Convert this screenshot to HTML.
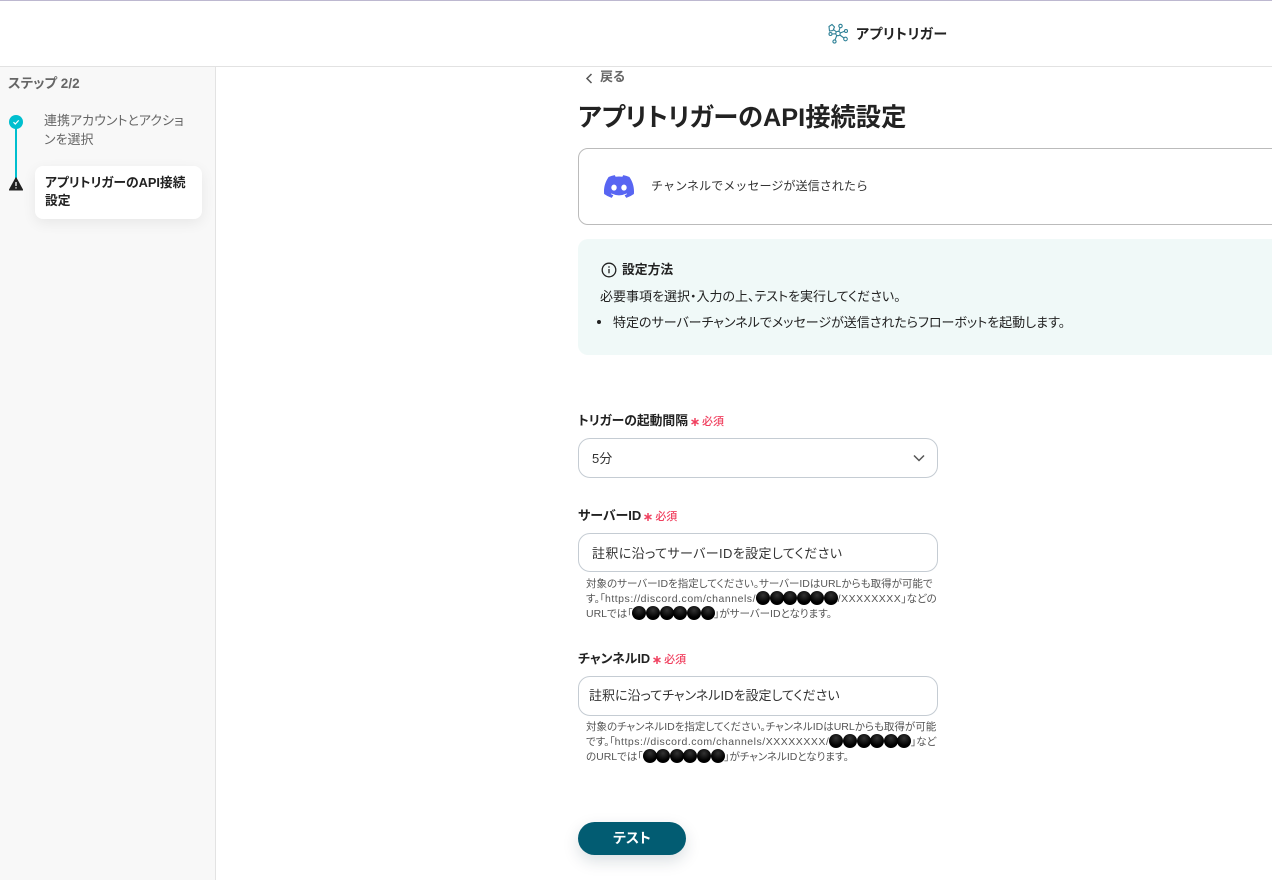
<!DOCTYPE html>
<html lang="ja"><head><meta charset="utf-8"><title>アプリトリガーのAPI接続設定</title>
<style>
*{box-sizing:border-box}
html,body{margin:0;padding:0}
body{width:1272px;height:880px;overflow:hidden;position:relative;background:#fff;color:#222;font-family:"Liberation Sans","Noto Sans CJK JP",sans-serif;font-feature-settings:"palt";}
.a{position:absolute;white-space:nowrap}
.b{font-weight:700}
.req{color:#f0405f;font-size:11px;font-weight:500;font-feature-settings:normal}
.req svg{margin:0 3px 0 3px;vertical-align:-1px}
.box{position:absolute;left:578px;width:360px;height:40px;border:1px solid #c5ccd3;border-radius:12px;background:#fff;font-size:13px;line-height:38px;color:#333}
.note{position:absolute;left:586px;width:352px;font-size:10.5px;line-height:15px;color:#555;white-space:nowrap}
.u{letter-spacing:.52px}
.d{display:inline-block;width:14px;height:14px;border-radius:50%;background:radial-gradient(circle at 50% 30%,#333,#000 60%);vertical-align:1.500px;margin:-4px -.4px -4px 0}
</style></head><body>
<div class="a" style="left:0;top:0;width:1272px;height:1px;background:#bdb8d0"></div>
<div class="a" style="left:0;top:66px;width:1272px;height:1px;background:#e2e2e2"></div>
<svg class="a" style="left:827px;top:23px" width="22" height="22" viewBox="0 0 22 22" fill="none" stroke="#2f8197" stroke-width="1.100">
<circle cx="11" cy="10.500" r="2.200"/><path d="M2 3.500 5 1.500 7.500 4 6 7.500 2.500 8Z"/><circle cx="13.500" cy="3" r="1.700"/><circle cx="19" cy="8" r="1.500"/><circle cx="18.500" cy="16" r="1.800"/><circle cx="7.500" cy="18.500" r="1.600"/><circle cx="3.500" cy="11" r="1.500"/>
<path d="M9.500 9 6.500 6.500M11.800 8.500 13 4.700M13.200 10 17.500 8.300M12.800 12 17 15M9.800 12.500 8 17M8.800 10.800 5 11"/></svg>
<div class="a b" style="left:856px;top:24px;font-size:14px;letter-spacing:.42px;line-height:20px;color:#222">アプリトリガー</div>

<div class="a" style="left:0;top:67px;width:216px;height:813px;background:#f8f8f8;border-right:1px solid #e3e3e3"></div>
<div class="a b" style="left:8px;top:75px;font-size:13.500px;line-height:18px;color:#666">ステップ 2/2</div>
<div class="a" style="left:15px;top:122px;width:2px;height:60px;background:#00bfcf"></div>
<svg class="a" style="left:9px;top:115px" width="14" height="14" viewBox="0 0 14 14"><circle cx="7" cy="7" r="7" fill="#00bfcf"/><path d="M4.500 7.200 6.300 9 9.700 5.400" fill="none" stroke="#fff" stroke-width="1.200"/></svg>
<svg class="a" style="left:9px;top:177px" width="14" height="14" viewBox="0 0 14 14"><path d="M7 .8 13.700 13H.3Z" fill="#222" stroke="#222" stroke-linejoin="round"/><path d="M7 5v4M7 10.300v1.200" stroke="#fff" stroke-width="1.300"/></svg>
<div class="a" style="left:44px;top:111px;font-size:13px;line-height:19px;color:#666">連携アカウントとアクショ<br>ンを選択</div>
<div class="a" style="left:35px;top:166px;width:167px;height:53px;background:#fff;border-radius:8px;box-shadow:0 4px 14px rgba(0,0,0,.07)"></div>
<div class="a b" style="left:45px;top:174px;font-size:12.800px;line-height:18px;color:#222">アプリトリガーのAPI接続<br>設定</div>

<svg class="a" style="left:584px;top:72px" width="10" height="12" viewBox="0 0 10 12"><path d="M7.500 2 3 6.500 7.500 11" fill="none" stroke="#555" stroke-width="1.500"/></svg>
<div class="a b" style="left:600px;top:68px;font-size:13px;line-height:18px;color:#666">戻る</div>
<div class="a b" style="left:578px;top:100px;font-size:25.300px;line-height:37px;color:#222">アプリトリガーのAPI接続設定</div>

<div class="a" style="left:578px;top:148px;width:720px;height:77px;border:1px solid #bbb;border-radius:10px;background:#fff"></div>
<svg class="a" style="left:604px;top:175px" width="30" height="23" viewBox="0 0 127.140 96.360"><path fill="#5865f2" d="M107.700 8.070A105.150 105.150 0 0 0 81.470 0a72.060 72.060 0 0 0-3.360 6.830 97.680 97.680 0 0 0-29.110 0A72.370 72.370 0 0 0 45.640 0a105.890 105.890 0 0 0-26.250 8.090C2.790 32.650-1.710 56.600.54 80.210a105.730 105.730 0 0 0 32.170 16.150 77.700 77.700 0 0 0 6.890-11.110 68.420 68.420 0 0 1-10.850-5.180c.91-.66 1.800-1.340 2.660-2a75.570 75.570 0 0 0 64.320 0c.87.710 1.760 1.390 2.660 2a68.680 68.680 0 0 1-10.870 5.190 77 77 0 0 0 6.890 11.100 105.250 105.250 0 0 0 32.190-16.140c2.640-27.380-4.510-51.110-18.900-72.150ZM42.450 65.690C36.180 65.690 31 60 31 53s5-12.740 11.430-12.740S54 46 53.890 53s-5.050 12.690-11.440 12.690Zm42.240 0C78.410 65.690 73.250 60 73.250 53s5-12.740 11.440-12.740S96.230 46 96.120 53s-5.040 12.690-11.430 12.690Z"/></svg>
<div class="a" style="left:651px;top:177px;font-size:12.100px;line-height:18px;color:#333;font-feature-settings:normal">チャンネルでメッセージが送信されたら</div>

<div class="a" style="left:578px;top:239px;width:720px;height:116px;background:#f0f9f8;border-radius:10px"></div>
<svg class="a" style="left:601px;top:262px" width="16" height="16" viewBox="0 0 16 16" fill="none" stroke="#222" stroke-width="1.300"><circle cx="8" cy="8" r="6.800"/><path d="M8 7v4.300M8 4.300v1.400"/></svg>
<div class="a b" style="left:622px;top:260px;font-size:12.800px;line-height:19px;color:#222">設定方法</div>
<div class="a" style="left:600px;top:287px;font-size:13px;line-height:19px;color:#222">必要事項を選択・入力の上、テストを実行してください。</div>
<div class="a" style="left:597px;top:320px;width:4px;height:4px;border-radius:50%;background:#222"></div>
<div class="a" style="left:613px;top:313px;font-size:13px;line-height:19px;color:#222">特定のサーバーチャンネルでメッセージが送信されたらフローボットを起動します。</div>

<div class="a b" style="left:578px;top:411px;font-size:12.800px;line-height:19px;color:#222">トリガーの起動間隔<span class="req"><svg width="8" height="8" viewBox="0 0 8 8" stroke="#f0405f" stroke-width="1.500"><path d="M4 0v8M.5 2 7.500 6M7.500 2 .5 6"/></svg>必須</span></div>
<div class="box" style="top:438px;padding-left:13px;line-height:40px">5分
<svg style="position:absolute;left:334px;top:15px" width="12" height="8" viewBox="0 0 12 8"><path d="M1 1.500 6 6.500 11 1.500" fill="none" stroke="#555" stroke-width="1.500"/></svg></div>

<div class="a b" style="left:578px;top:506px;font-size:13px;line-height:19px;color:#222">サーバーID<span class="req"><svg width="8" height="8" viewBox="0 0 8 8" stroke="#f0405f" stroke-width="1.500"><path d="M4 0v8M.5 2 7.500 6M7.500 2 .5 6"/></svg>必須</span></div>
<div class="box" style="top:533px;height:39px;padding-left:13px;letter-spacing:.38px;line-height:39px">註釈に沿ってサーバーIDを設定してください</div>
<div class="note" style="top:577px">対象のサーバーIDを指定してください。サーバーIDはURLからも取得が可能で<br>す。「<span class="u">https://discord.com/channels/</span><i class="d"></i><i class="d"></i><i class="d"></i><i class="d"></i><i class="d"></i><i class="d"></i><span class="u">/XXXXXXXX</span>」などの<br>URLでは「<i class="d"></i><i class="d"></i><i class="d"></i><i class="d"></i><i class="d"></i><i class="d"></i>」がサーバーIDとなります。</div>

<div class="a b" style="left:578px;top:649px;font-size:12.800px;line-height:19px;color:#222">チャンネルID<span class="req"><svg width="8" height="8" viewBox="0 0 8 8" stroke="#f0405f" stroke-width="1.500"><path d="M4 0v8M.5 2 7.500 6M7.500 2 .5 6"/></svg>必須</span></div>
<div class="box" style="top:676px;padding-left:10px">註釈に沿ってチャンネルIDを設定してください</div>
<div class="note" style="top:720px">対象のチャンネルIDを指定してください。チャンネルIDはURLからも取得が可能<br>です。「<span class="u">https://discord.com/channels/XXXXXXXX/</span><i class="d"></i><i class="d"></i><i class="d"></i><i class="d"></i><i class="d"></i><i class="d"></i>」など<br>のURLでは「<i class="d"></i><i class="d"></i><i class="d"></i><i class="d"></i><i class="d"></i><i class="d"></i>」がチャンネルIDとなります。</div>

<div class="a b" style="left:578px;top:822px;width:108px;height:33px;border-radius:17px;background:#025c72;color:#fff;text-align:center;font-size:14px;line-height:32px;box-shadow:0 6px 16px rgba(0,40,60,.15)">テスト</div>
</body></html>
